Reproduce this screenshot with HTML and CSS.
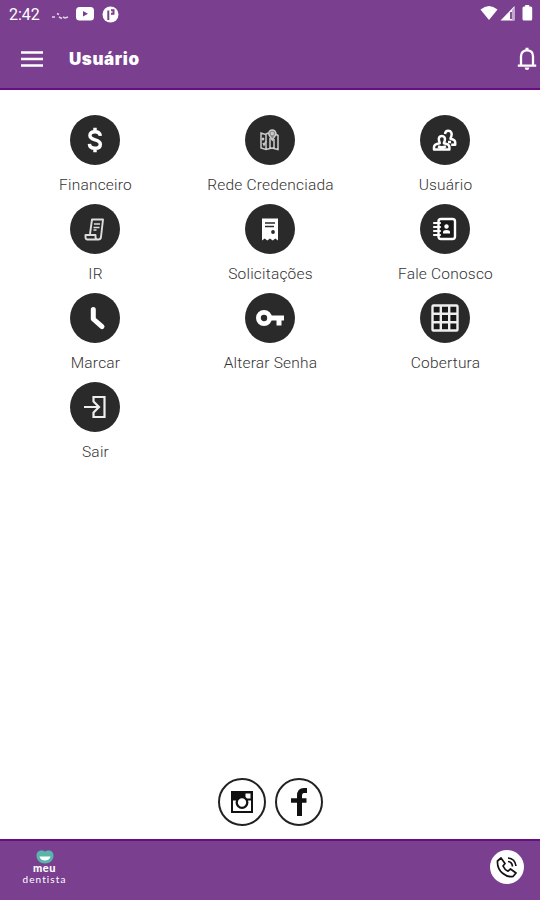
FILE: index.html
```html
<!DOCTYPE html>
<html lang="pt-BR">

<head>
    <meta charset="UTF-8">
    <meta name="viewport" content="width=device-width, initial-scale=1.0">
    <title>Usuário</title>
    <link rel="stylesheet" href="styles.css">
</head>

<body>
    <header class="header">
        <div class="status-bar">
            <span class="clock">2:42</span>
            <svg class="weather" width="18" height="8" viewBox="0 0 18 8">
                <path d="M1 5h3M6 1.500l2 1M8 5l3 1.500M12 5l2 1 3-1" />
            </svg>
            <svg class="video" width="18" height="14" viewBox="0 0 18 14">
                <rect width="18" height="13.500" rx="3.500" fill="#fff" />
                <path d="M7 4l5 2.800-5 2.800z" fill="#7b3f90" />
            </svg>
            <svg class="app" width="17" height="17" viewBox="0 0 17 17">
                <circle cx="8.500" cy="8.500" r="8" fill="#fff" />
                <path d="M6.300 14V4.500M9 4.300h2.500v3.500H9" fill="none" stroke="#7b3f90" stroke-width="2" />
            </svg>
            <div class="signals">
                <svg width="18" height="16" viewBox="0 0 18 16">
                    <path d="M.5 4.500Q9-2.500 17.500 4.500L9 15z" fill="#fff" />
                </svg>
                <svg width="16" height="16" viewBox="0 0 16 16">
                    <path d="M.5 15.500L14.500 1v14.500z" fill="#fff" />
                    <path d="M11 7v7" stroke="#7b3f90" stroke-width="1.800" />
                    <path d="M12 5L14.500 2v13h-2.500z" fill="#c5a8d0" />
                </svg>
                <svg width="11" height="16" viewBox="0 0 11 16">
                    <path d="M3.200 0h4v1.500h1.500q1.500 0 1.500 1.500v11q0 1.500-1.500 1.500H2Q.5 15.500.5 14V3Q.5 1.500 2 1.500h1.200z" fill="#fff" />
                </svg>
            </div>
        </div>
        <div class="toolbar">
            <svg class="menu" width="22" height="16" viewBox="0 0 22 16">
                <path d="M0 1.500h22M0 8h22M0 14.500h22" stroke="#fff" stroke-width="2.300" />
            </svg>
            <h1>Usuário</h1>
            <svg class="bell" width="20" height="24" viewBox="0 0 20 24">
                <path d="M4 18V9.500C4 5.500 6.500 3.300 10 3.300s6 2.200 6 6.200V18M.8 18.700h18.400" fill="none" stroke="#fff" stroke-width="2.300" />
                <path d="M8.500.8h3v2.500h-3zM7.600 20.500h4.800q-.4 2.500-2.400 2.500t-2.400-2.500z" fill="#fff" />
            </svg>
        </div>
    </header>

    <main class="content">
        <nav class="grid">
            <a class="item">
                <span class="icon">
                    <svg width="32" height="32" viewBox="0 0 24 24">
                        <path d="M16 8.900C15.800 7 14.400 5.800 12 5.800c-2.200 0-3.800 1-3.800 2.900 0 4.200 7.800 2.200 7.800 6.400 0 2-1.700 3.100-4 3.100-2.500 0-4.100-1.200-4.200-3.300M12 2.800v3M12 18v3.200" fill="none" stroke="#fff" stroke-width="2.600" />
                    </svg>
                </span>
                <span class="label">Financeiro</span>
            </a>
            <a class="item">
                <span class="icon">
                    <svg width="22" height="24" viewBox="0 0 22 24" fill="none" stroke="#ccc" stroke-width="1.500">
                        <path d="M9 5L6.500 6.500 2 5v15l5 1.500 6-1.500 6 1.500V7.500L16.500 6M7 7v14M11 10v10M15 11v9" />
                        <path d="M13.300 12C11.500 9 9.700 7.500 9.700 5.500a3.600 3.600 0 0 1 7.200 0c0 2-1.800 3.500-3.600 6.500z" fill="#888" />
                        <circle cx="13.300" cy="5.500" r="1" />
                        <path d="M3 10l2 2M5 10l-2 2M4 15l1 2 2-4" />
                    </svg>
                </span>
                <span class="label">Rede Credenciada</span>
            </a>
            <a class="item">
                <span class="icon">
                    <svg width="26" height="26" viewBox="0 0 26 26" fill="none" stroke="#fff" stroke-width="2.500" stroke-linejoin="round">
                        <path d="M13 7c.3-2.300 1.400-3.200 3.200-3.200 3 0 4 2.300 3.200 5.200-.3 1.100-.9 1.800-.9 2.800 2.700.6 4.700 1.500 4.700 3.500v2.500h-4" />
                        <path d="M7 13.500C6.300 10.700 7.500 9 9.800 9s3.700 1.700 3 4.500c-.3 1.200-.9 1.700-.9 2.800 3.300.5 5.500 1.500 5.500 3.700v2.500H2V20c0-2.200 2.300-3.200 5.700-3.700 0-1.100-.5-1.700-.7-2.800zM6 19.500q4 1.500 8-.2M16 15h3" />
                    </svg>
                </span>
                <span class="label">Usuário</span>
            </a>
            <a class="item">
                <span class="icon">
                    <svg width="24" height="26" viewBox="0 0 24 26" fill="none" stroke="#ddd" stroke-width="1.900" stroke-linejoin="round">
                        <path d="M7 18L9 3.500h11L18 21q-.4 2.500-2.500 2.500H4.500q-2 0-2-2.500v-2h10v2q0 2.500 2.500 2.500" />
                        <path d="M11 8h6M10.500 11.500h6M10.500 14h3" stroke-width="1.500" />
                    </svg>
                </span>
                <span class="label">IR</span>
            </a>
            <a class="item">
                <span class="icon">
                    <svg width="18" height="24" viewBox="0 0 18 24">
                        <path d="M1 1.500h16v22l-2.700-2-2.600 2-2.700-2-2.700 2-2.600-2-2.700 2z" fill="#fff" />
                        <path d="M4 6h10M4 9.500h9" stroke="#2a2a2a" stroke-width="1.700" />
                        <circle cx="12" cy="15" r="1.900" fill="#2a2a2a" />
                    </svg>
                </span>
                <span class="label">Solicitações</span>
            </a>
            <a class="item">
                <span class="icon">
                    <svg width="26" height="26" viewBox="0 0 26 26">
                        <rect x="6.500" y="3" width="16.500" height="20" rx="2.500" fill="#191919" stroke="#fff" stroke-width="2.400" />
                        <path d="M2 7h6M2 11h6M2 15h6M2 19h6" stroke="#fff" stroke-width="2.200" stroke-linecap="round" />
                        <circle cx="14.500" cy="10.500" r="2.200" fill="#fff" />
                        <path d="M11 17.500v-1.500q0-2 3.500-2t3.500 2v1.500z" fill="#fff" />
                    </svg>
                </span>
                <span class="label">Fale Conosco</span>
            </a>
            <a class="item">
                <span class="icon">
                    <svg width="26" height="26" viewBox="0 0 26 26">
                        <path d="M11.300 4.500V14l8.700 7.700" fill="none" stroke="#fff" stroke-width="5" stroke-linecap="round" stroke-linejoin="round" />
                    </svg>
                </span>
                <span class="label">Marcar</span>
            </a>
            <a class="item">
                <span class="icon">
                    <svg width="30" height="20" viewBox="0 0 30 20" fill="none" stroke="#fff">
                        <circle cx="9" cy="10" r="5.600" stroke-width="4.800" />
                        <path d="M16 10h13" stroke-width="5" />
                        <path d="M24 10v7.500" stroke-width="5" />
                    </svg>
                </span>
                <span class="label">Alterar Senha</span>
            </a>
            <a class="item">
                <span class="icon">
                    <svg width="28" height="28" viewBox="0 0 28 28">
                        <rect x="1.500" y="1.500" width="25" height="25" rx="1" fill="#191919" stroke="#eee" stroke-width="2.400" />
                        <path d="M9.800 1v26M18.200 1v26M1 9.800h26M1 18.200h26" stroke="#eee" stroke-width="2.400" />
                    </svg>
                </span>
                <span class="label">Cobertura</span>
            </a>
            <a class="item">
                <span class="icon">
                    <svg width="24" height="24" viewBox="0 0 24 24" fill="none" stroke="#eee" stroke-width="2.200">
                        <path d="M10.500 7V2h11v20h-11v-5M1 12h15M10.500 6.500L16 12l-5.500 5.500" />
                    </svg>
                </span>
                <span class="label">Sair</span>
            </a>
        </nav>

        <div class="social">
            <a class="social-link">
                <svg width="22" height="22" viewBox="0 0 22 22">
                    <rect x="1" y="1" width="20" height="20" fill="#fff" stroke="#111" stroke-width="2" />
                    <path d="M1 1h20v8.500H1z" fill="#111" />
                    <rect x="14.500" y="2.500" width="5" height="5" fill="#fff" />
                    <circle cx="11" cy="11.500" r="5.300" fill="#fff" stroke="#111" stroke-width="2.300" />
                </svg>
            </a>
            <a class="social-link">
                <svg width="18" height="30" viewBox="0 0 18 30" fill="none" stroke="#111">
                    <path d="M17 3.500h-3Q9.500 3.500 9.500 9v20" stroke-width="5" />
                    <path d="M1 13.500h15.500" stroke-width="4.500" />
                </svg>
            </a>
        </div>
    </main>

    <footer class="footer">
        <div class="brand">
            <svg width="18" height="14" viewBox="0 0 18 14">
                <path d="M9 1.500C11-.3 17.500-.5 17.500 5.500 17.500 10 14 13.500 9 13.500S.5 10 .5 5.500C.5-.5 7-.3 9 1.500z" fill="#57b5ac" />
                <path d="M3.500 6.500h11q-1 4-5.500 4t-5.500-4z" fill="#fff" />
            </svg>
            <span class="brand-top">meu</span>
            <span class="brand-bottom">dentista</span>
        </div>
        <a class="call">
            <svg width="22" height="22" viewBox="0 0 22 22" fill="none" stroke="#111" stroke-width="1.700" stroke-linejoin="round">
                <path d="M5 2L1.500 5Q1 13 7 17.500q5 4 10 3l3-3.500-5.500-4-2.500 2.200Q8.500 13.500 7 10l2-2.500z" />
                <path d="M12 5.500q4 .3 4.500 5M12 2q7 .5 8 8" />
            </svg>
        </a>
    </footer>
</body>

</html>
```

FILE: styles.css
```css
* {
    box-sizing: border-box;
    margin: 0;
    padding: 0;
    font-family: Roboto, 'Open Sans', sans-serif;
}

body {
    display: flex;
    flex-direction: column;
    height: 100vh;
    background: #fff;
    overflow: hidden;
}

.header {
    height: 90px;
    background: #7b3f90;
    border-bottom: 2px solid #650f80;
    color: #fff;
}

svg {
    display: block;
    flex-shrink: 0;
}

/* Status bar */
.status-bar {
    display: flex;
    align-items: center;
    height: 28px;
    padding: 0 7px 0 9px;
}

.clock {
    width: 42px;
    font-size: 16px;
}

.weather {
    margin-top: 4px;
    fill: none;
    stroke: #e2d3e8;
    stroke-width: 1.4;
}

.video {
    margin-left: 7px;
}

.app {
    margin-left: 8px;
}

.signals {
    display: flex;
    align-items: center;
    gap: 2px;
    height: 16px;
    margin: -2px 0 0 auto;
}

.signals svg:last-child {
    margin-left: 4px;
}

/* Toolbar */
.toolbar {
    display: flex;
    align-items: center;
    height: 62px;
    padding: 0 3px 0 21px;
}

.toolbar h1 {
    margin-left: 26px;
    font-family: Inter, sans-serif;
    font-size: 17px;
    font-weight: 900;
    letter-spacing: 0.6px;
}

.bell {
    margin-left: auto;
}

/* Menu grid */
.content {
    display: flex;
    flex: 1;
    flex-direction: column;
    justify-content: space-between;
    padding: 25px 7px 13px;
}

.grid {
    display: grid;
    grid-template-columns: repeat(3, 175px);
    grid-auto-rows: 89px;
    justify-content: center;
}

.item {
    display: flex;
    flex-direction: column;
    align-items: center;
}

.icon {
    display: flex;
    align-items: center;
    justify-content: center;
    width: 50px;
    height: 50px;
    border-radius: 50%;
    background: #2a2a2a;
}

.label {
    margin-top: 10px;
    padding-left: 1px;
    color: #333;
    font-size: 15.5px;
    font-weight: 300;
    line-height: 20px;
    letter-spacing: 0.2px;
    white-space: nowrap;
}

.social {
    display: flex;
    justify-content: center;
    gap: 9px;
}

.social-link {
    display: flex;
    align-items: center;
    justify-content: center;
    width: 48px;
    height: 48px;
    border: 2px solid #222;
    border-radius: 50%;
}

/* Footer */
.footer {
    display: flex;
    align-items: flex-start;
    justify-content: space-between;
    height: 61px;
    padding: 9px 16px 0 21px;
    background: #7b3f90;
    border-top: 2px solid #650f80;
}

.brand {
    display: flex;
    flex-direction: column;
    align-items: center;
    width: 47px;
    color: #fff;
}

.brand-top,
.brand-bottom {
    font-family: Lato, sans-serif;
    font-size: 11px;
    font-weight: 900;
    line-height: 8px;
    letter-spacing: 0.6px;
}

.brand-bottom {
    margin-top: 3px;
    font-size: 10px;
    font-weight: normal;
    letter-spacing: 1.1px;
}

.call {
    display: flex;
    align-items: center;
    justify-content: center;
    width: 34px;
    height: 34px;
    border-radius: 50%;
    background: #fff;
}
```
